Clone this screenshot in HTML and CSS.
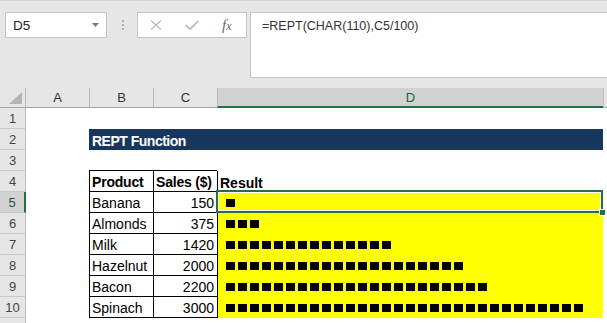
FILE: index.html
```html
<!DOCTYPE html>
<html>
<head>
<meta charset="utf-8">
<link rel="stylesheet" href="styles.css">
</head>
<body>
<div class="toolbar">
  <div class="namebox"><span>D5</span><svg class="dd" width="7" height="4" viewBox="0 0 7 4"><path d="M0 0H7L3.5 4Z" fill="#7a7a7a"/></svg></div>
  <div class="grip"><i></i><i></i><i></i></div>
  <div class="fbtns">
    <svg class="ix" width="12" height="10" viewBox="0 0 12 10"><path d="M1 0.5L11 9.5M11 0.5L1 9.5" stroke="#bdbdbd" stroke-width="1.4" fill="none"/></svg>
    <svg class="ick" width="14" height="10" viewBox="0 0 14 10"><path d="M0.8 5L5 9.2L13.4 0.8" stroke="#bdbdbd" stroke-width="1.8" fill="none"/></svg>
    <span class="fx"><i>f</i><i class="x">x</i></span>
  </div>
  <div class="fbar">=REPT(CHAR(110),C5/100)</div>
</div>
<div class="sheet">
  <div class="corner"><svg width="13" height="12" viewBox="0 0 13 12"><path d="M13 0V12H0Z" fill="#b4b4b4"/></svg></div>
  <div class="ch">A</div>
  <div class="ch sep">B</div>
  <div class="ch sep">C</div>
  <div class="ch sep sel">D</div>
  <div class="ch sep"></div>

  <div class="rh">1</div><div></div><div></div><div></div><div></div><div></div>

  <div class="rh">2</div><div></div><div class="banner">REPT Function</div><div></div>

  <div class="rh">3</div><div></div><div class="top"></div><div class="top"></div><div></div><div></div>

  <div class="rh">4</div><div></div>
  <div class="t b">Product</div><div class="t b">Sales ($)</div><div class="res b">Result</div><div></div>

  <div class="rh rsel">5</div><div></div>
  <div class="t">Banana</div><div class="t num">150</div>
  <div class="bar cur"><span class="sq" style="width:9px"></span><div class="selbox"></div><div class="handle"></div></div><div></div>

  <div class="rh">6</div><div></div>
  <div class="t">Almonds</div><div class="t num">375</div>
  <div class="bar"><span class="sq" style="width:33px"></span></div><div></div>

  <div class="rh">7</div><div></div>
  <div class="t">Milk</div><div class="t num">1420</div>
  <div class="bar"><span class="sq" style="width:165px"></span></div><div></div>

  <div class="rh">8</div><div></div>
  <div class="t">Hazelnut</div><div class="t num">2000</div>
  <div class="bar"><span class="sq" style="width:237px"></span></div><div></div>

  <div class="rh">9</div><div></div>
  <div class="t">Bacon</div><div class="t num">2200</div>
  <div class="bar"><span class="sq" style="width:261px"></span></div><div></div>

  <div class="rh">10</div><div></div>
  <div class="t">Spinach</div><div class="t num">3000</div>
  <div class="bar"><span class="sq" style="width:357px"></span></div><div></div>

  <div class="rh"></div><div></div><div></div><div></div><div></div><div></div>
</div>
</body>
</html>
```
FILE: styles.css
```css
* { box-sizing: border-box; }
html, body { margin: 0; padding: 0; }
body {
  width: 607px;
  height: 323px;
  overflow: hidden;
  background: #fff;
  font-family: "Liberation Sans", Arial, sans-serif;
}

/* ---------- formula toolbar ---------- */
.toolbar {
  height: 88px;
  background: #e6e6e6;
  border-top: 1px solid #d4d4d4;
  padding-top: 11px;
  display: flex;
  align-items: flex-start;
}
.namebox {
  margin-left: 5px;
  width: 102px;
  height: 26px;
  background: #fff;
  border: 1px solid #c6c6c6;
  display: flex;
  align-items: center;
  justify-content: space-between;
  padding: 0 7px;
  font-size: 13.5px;
  color: #222;
}
.grip {
  margin-left: 15px;
  margin-top: 8px;
  display: flex;
  flex-direction: column;
  gap: 2px;
}
.grip i {
  display: block;
  width: 2px;
  height: 2px;
  background: #b0b0b0;
}
.fbtns {
  margin-left: 13px;
  width: 110px;
  height: 26px;
  background: #fff;
  border: 1px solid #c6c6c6;
  display: flex;
  align-items: center;
}
.ix { margin-left: 12px; }
.ick { margin-left: 23px; }
.fx {
  margin-left: 23px;
  font-family: "Liberation Serif", "Times New Roman", serif;
  font-size: 15px;
  color: #666;
  line-height: 1;
}
.fx .x { font-size: 12px; }
.fbar {
  margin-left: 3px;
  flex: 1;
  height: 66px;
  background: #fff;
  border: 1px solid #c6c6c6;
  border-right: none;
  padding: 5px 0 0 11px;
  font-size: 12.5px;
  line-height: 16px;
  color: #333;
}

/* ---------- sheet grid ---------- */
.sheet {
  display: grid;
  grid-template-columns: 26px 63px 64px 64px 386px 4px;
  grid-template-rows: 20px repeat(11, 21px);
  font-size: 14px;
  color: #000;
}
.corner {
  background: #e6e6e6;
  border-right: 1px solid #bcbcbc;
  border-bottom: 1px solid #a6a6a6;
  display: flex;
  align-items: flex-end;
  justify-content: flex-end;
  padding: 0 3px 3px 0;
}
.ch {
  background: #e6e6e6;
  border-bottom: 1px solid #a6a6a6;
  display: flex;
  align-items: center;
  justify-content: center;
  font-size: 13px;
  color: #333;
}
.ch.sep { border-left: 1px solid #bcbcbc; }
.ch.sel {
  background: #d2d2d2;
  border-bottom: 2px solid #217346;
  color: #1d5c38;
}
.rh {
  background: #e6e6e6;
  border-right: 1px solid #bcbcbc;
  border-bottom: 1px solid #c8c8c8;
  display: flex;
  align-items: center;
  justify-content: center;
  font-size: 13px;
  color: #444;
}
.rh.rsel {
  background: #d2d2d2;
  border-right: 2px solid #217346;
  color: #1d5c38;
}

.banner {
  grid-column: span 3;
  background: #17375e;
  color: #fff;
  font-weight: bold;
  font-size: 14px;
  letter-spacing: -0.5px;
  line-height: 16px;
  display: flex;
  align-items: flex-end;
  padding: 0 0 1px 3px;
}
.top { border-bottom: 1px solid #000; }
.t {
  border-left: 1px solid #000;
  border-bottom: 1px solid #000;
  display: flex;
  align-items: flex-end;
  padding: 0 3px 1px 2px;
  line-height: 16px;
  white-space: nowrap;
}
.b { font-weight: bold; }
.t.b { letter-spacing: -0.2px; }
.num { justify-content: flex-end; }
.res {
  border-left: 1px solid #000;
  display: flex;
  align-items: flex-end;
  padding: 0 3px 1px 2px;
  line-height: 16px;
}
.bar {
  border-left: 1px solid #000;
  background: #ffff00;
  display: flex;
  align-items: center;
  padding-left: 8px;
}
.sq {
  display: block;
  height: 8px;
  margin-top: 1px;
  background: repeating-linear-gradient(to right, #000 0 9px, transparent 9px 12px);
}
.cur { position: relative; }
.selbox {
  position: absolute;
  top: -2px;
  left: -2px;
  right: 0;
  bottom: 0;
  border: 2px solid #217346;
  box-shadow: inset 0 0 0 1px #fff;
  z-index: 2;
}
.handle {
  position: absolute;
  right: -3px;
  bottom: -3px;
  width: 7px;
  height: 7px;
  background: #217346;
  border: 1px solid #fff;
  z-index: 3;
}
```
